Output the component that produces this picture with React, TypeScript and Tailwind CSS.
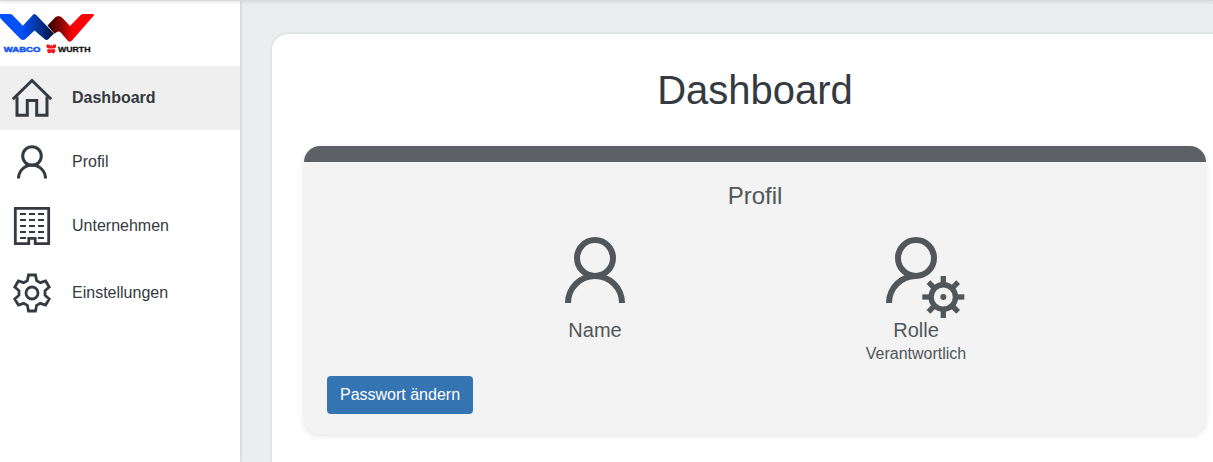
import type { ReactNode } from 'react';

interface NavItem {
  label: string;
  icon: ReactNode;
  active?: boolean;
}

function Logo() {
  return (
    <svg width="96" height="42" viewBox="0 0 96 42" className="block">
      <defs>
        <linearGradient id="blue" x1="0" x2="1">
          <stop offset="0.4" stopColor="#0450fb" />
          <stop offset="0.7" stopColor="#05359f" />
          <stop offset="1" stopColor="#020f38" />
        </linearGradient>
        <linearGradient id="red" x1="0" x2="1">
          <stop offset="0" stopColor="#2c0202" />
          <stop offset="0.25" stopColor="#7a0505" />
          <stop offset="0.55" stopColor="#fb0407" />
        </linearGradient>
      </defs>
      <path d="M0 0H10Q11.500 0 12.500 1L22.800 11.800L33 .8Q34.500 -.7 36 .8L54 19.500L48.500 25Q46.500 26.800 44.500 25L34.500 16.500L25.500 25Q23 27.200 20.500 25L1 5Q0 4 0 3Z" fill="url(#blue)" />
      <path d="M47.500 11.500L55 3.500Q58.500 .5 62 3.500L70 12L81 .8Q81.800 0 83 0H93Q94.800 0 93.800 1.500L72 26.500Q69.800 28.800 67.600 26.500L60.500 18.300Q58.500 16.800 56.500 18.300L54.500 19.800Z" fill="url(#red)" />
      <text x="3.800" y="37.800" textLength="36.500" lengthAdjust="spacingAndGlyphs" fill="#0b55f5" stroke="#0b55f5" strokeWidth="0.500" fontSize="7.800" fontWeight="700" fontFamily="Liberation Sans, sans-serif">WABCO</text>
      <path d="M46.500 30.500H49.300L50.400 32L51.300 30.500L52.300 32L53.200 30.500H56V33.500L54 34.500H48.500L46.500 33.500ZM47.300 35.200H55.200V38L53.500 39.500L51.300 38.500L49 39.500L47.300 38Z" fill="#f01720" />
      <text x="58" y="37.800" textLength="32.500" lengthAdjust="spacingAndGlyphs" fill="#111" stroke="#111" strokeWidth="0.300" fontSize="7.800" fontWeight="700" fontFamily="Liberation Sans, sans-serif">WURTH</text>
    </svg>
  );
}

function HomeIcon() {
  return (
    <svg width="40" height="40" viewBox="0 0 40 40" fill="none" stroke="currentColor" strokeWidth="3">
      <path d="M.8 21.200L20 2.500L39.200 21.200" />
      <path d="M5 18.500V37.300H15.300V22.500H24.700V37.300H35V18.500" />
    </svg>
  );
}

function UserIcon() {
  return (
    <svg width="40" height="40" viewBox="0 0 40 40" fill="none" stroke="currentColor" strokeWidth="3">
      <circle cx="20" cy="14" r="9.300" />
      <path d="M6.500 36.500A13.500 13.500 0 0 1 33.500 36.500" />
    </svg>
  );
}

function BuildingIcon() {
  return (
    <svg width="40" height="40" viewBox="0 0 40 40" fill="none" stroke="currentColor">
      <path d="M3.300 2.300H36.700V37.700H23.200V32.300H16.800V37.700H3.300Z" strokeWidth="2.800" />
      <path d="M8 8H32M8 14H32M8 20H32M8 26H32" strokeWidth="2.200" strokeDasharray="6 3" />
      <path d="M8 32H14M26 32H32" strokeWidth="2.200" />
    </svg>
  );
}

function GearIcon() {
  return (
    <svg width="40" height="40" viewBox="-20 -20 40 40" fill="none" stroke="currentColor" strokeWidth="2.800">
      <circle r="6" />
      <path d="M-3.500 -18H3.500L4.600 -12.300L8.300 -10.300L13.600 -12L17.200 -6L13 -2.200V2.200L17.200 6L13.600 12L8.300 10.300L4.600 12.300L3.500 18H-3.500L-4.600 12.300L-8.300 10.300L-13.600 12L-17.200 6L-13 2.200V-2.200L-17.200 -6L-13.600 -12L-8.300 -10.300L-4.600 -12.300Z" />
    </svg>
  );
}

function NameIcon() {
  return (
    <svg width="80" height="84" viewBox="0 0 80 84" fill="none" stroke="currentColor" strokeWidth="6">
      <circle cx="40" cy="24" r="18" />
      <path d="M13 69A27 27 0 0 1 67 69" />
    </svg>
  );
}

function RoleIcon() {
  const teeth = [0, 45, 90, 135, 180, 225, 270, 315];
  return (
    <svg width="100" height="84" viewBox="0 0 100 84" fill="none" stroke="currentColor">
      <circle cx="50" cy="24" r="18" strokeWidth="6" />
      <path d="M23 69A27 27 0 0 1 50 42" strokeWidth="6" />
      <g transform="translate(77.300 63)">
        <circle r="12.200" strokeWidth="5.400" />
        <circle r="3" fill="currentColor" stroke="none" />
        {teeth.map((angle) => (
          <path key={angle} d="M0 -13V-21" strokeWidth="5.300" transform={`rotate(${angle})`} />
        ))}
      </g>
    </svg>
  );
}

const navItems: NavItem[] = [
  { label: 'Dashboard', icon: <HomeIcon />, active: true },
  { label: 'Profil', icon: <UserIcon /> },
  { label: 'Unternehmen', icon: <BuildingIcon /> },
  { label: 'Einstellungen', icon: <GearIcon /> },
];

export default function App() {
  return (
    <div className="relative flex h-[462px] overflow-hidden bg-[#eaeeef] font-['Liberation_Sans',Arial,sans-serif] text-base text-[#343a40]">
      {/* Shadow of the header bar */}
      <div className="absolute inset-x-0 top-0 z-20 h-px bg-[#d7d9da] shadow-[0_1px_3px_rgba(0,0,0,0.2)]" />

      {/* Sidebar */}
      <aside className="z-10 w-60 shrink-0 bg-white shadow-[0_0_4px_rgba(0,0,0,0.2)]">
        <div className="h-[66px] pt-3.5">
          <Logo />
        </div>
        <nav>
          {navItems.map((item) => (
            <a
              key={item.label}
              className={`flex items-center gap-5 px-3 last:h-[70px] ${item.active ? 'h-16 bg-[#efefef] font-bold' : 'h-16'}`}
            >
              {item.icon}
              <span>{item.label}</span>
            </a>
          ))}
        </nav>
      </aside>

      {/* Content */}
      <main className="shrink-0 pt-[34px] pl-8">
        <div className="h-[480px] w-[966px] rounded-2xl bg-white px-8 pt-8 shadow-[0_0_3px_rgba(0,0,0,0.15)]">
          <h1 className="text-center text-[40px] leading-12">Dashboard</h1>

          <section className="mt-8 h-72 overflow-hidden rounded-2xl bg-[#f3f3f3] text-[#505659] shadow-[0_2px_6px_rgba(0,0,0,0.11)]">
            <div className="h-4 bg-[#5d6166]" />
            <h2 className="pt-5 text-center text-2xl leading-7">Profil</h2>
            <div className="mt-6 flex justify-center pl-px">
              <div className="flex w-[321px] flex-col items-center">
                <NameIcon />
                <span className="text-xl leading-6">Name</span>
              </div>
              <div className="flex w-[321px] flex-col items-center">
                <RoleIcon />
                <span className="text-xl leading-6">Rolle</span>
                <span className="leading-6">Verantwortlich</span>
              </div>
            </div>
            <button className="mt-2.5 ml-[23px] h-[38px] w-[146px] rounded-[4px] bg-[#3474b2] text-white">
              Passwort ändern
            </button>
          </section>
        </div>
      </main>
    </div>
  );
}
